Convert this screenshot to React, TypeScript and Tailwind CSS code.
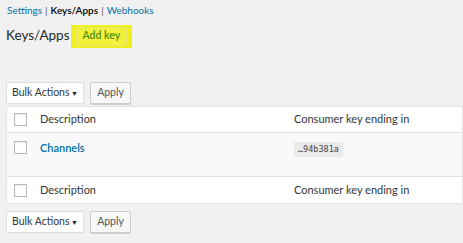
import { ReactNode } from 'react';

const font = { fontFamily: 'Lato, "Open Sans", sans-serif' };

function Checkbox() {
  return <span className="inline-block w-[13px] h-[13px] border border-[#b4b9be] bg-white shadow-[inset_0_1px_2px_rgba(0,0,0,0.07)]" />;
}

function TableNav() {
  return (
    <div className="flex items-center gap-[6px] pl-[6px] h-[22px]">
      <div className="flex items-center justify-between w-[78px] h-[22px] pl-[5px] pr-[5px] bg-white border border-[#ddd] text-[10.5px] text-[#32373c] whitespace-nowrap">
        <span>Bulk Actions</span>
        <span className="text-[7px] text-[#222]">▼</span>
      </div>
      <div className="flex items-center justify-center w-[41px] h-[22px] bg-[#f7f7f7] border border-[#ccc] rounded-[2px] shadow-[0_1px_0_#ccc] text-[10.5px] text-[#555]">
        Apply
      </div>
    </div>
  );
}

function Row({ children, className = '' }: { children: ReactNode; className?: string }) {
  return <div className={`flex ${className}`}>{children}</div>;
}

export default function App() {
  return (
    <div className="w-[463px] h-[243px] bg-[#f1f1f1] overflow-hidden" style={font}>
      {/* sub nav */}
      <div className="pl-[7px] pt-[2px] text-[10px] leading-[16px] text-[#555] whitespace-nowrap">
        <a className="text-[#0073aa]">Settings</a>
        <span className="mx-[3px]">|</span>
        <span className="font-semibold text-black">Keys/Apps</span>
        <span className="mx-[3px]">|</span>
        <a className="text-[#0073aa]">Webhooks</a>
      </div>

      {/* heading */}
      <div className="flex items-center h-[24px] mt-[6px] pl-[6px]">
        <h1 className="text-[13.5px] text-[#23282d] leading-none">Keys/Apps</h1>
        <div className="ml-[1px] px-[5px] py-[2px] bg-[#f0f01e]">
          <div className="flex items-center h-[19px] px-[6px] border border-[#e6e66a] bg-[#f2f23c] rounded-[2px] text-[10.5px] font-semibold text-[#4f8a10]">
            Add key
          </div>
        </div>
      </div>

      <div className="h-[34px]" />
      <TableNav />

      {/* table */}
      <div className="mt-[2px] ml-[6px] bg-white border border-[#e5e5e5] text-[11px] text-[#32373c]">
        <Row className="h-[26px] items-center border-b border-[#e1e1e1]">
          <div className="w-[33px] pl-[7px] flex"><Checkbox /></div>
          <div className="w-[254px]">Description</div>
          <div>Consumer key ending in</div>
        </Row>
        <Row className="h-[43px] bg-[#f9f9f9] pt-[7px]">
          <div className="w-[33px] pl-[7px] flex pt-[1px]"><Checkbox /></div>
          <div className="w-[254px] font-semibold text-[#0073aa] leading-[16px]">Channels</div>
          <div>
            <span className="inline-block px-[4px] py-[1px] bg-[#eaeaea] text-[#444] text-[8.5px] leading-[13px]" style={{ fontFamily: '"DejaVu Sans Mono", monospace' }}>
              …94b381a
            </span>
          </div>
        </Row>
        <Row className="h-[27px] items-center border-t border-[#e1e1e1]">
          <div className="w-[33px] pl-[7px] flex"><Checkbox /></div>
          <div className="w-[254px]">Description</div>
          <div>Consumer key ending in</div>
        </Row>
      </div>

      <div className="h-[7px]" />
      <TableNav />
    </div>
  );
}
